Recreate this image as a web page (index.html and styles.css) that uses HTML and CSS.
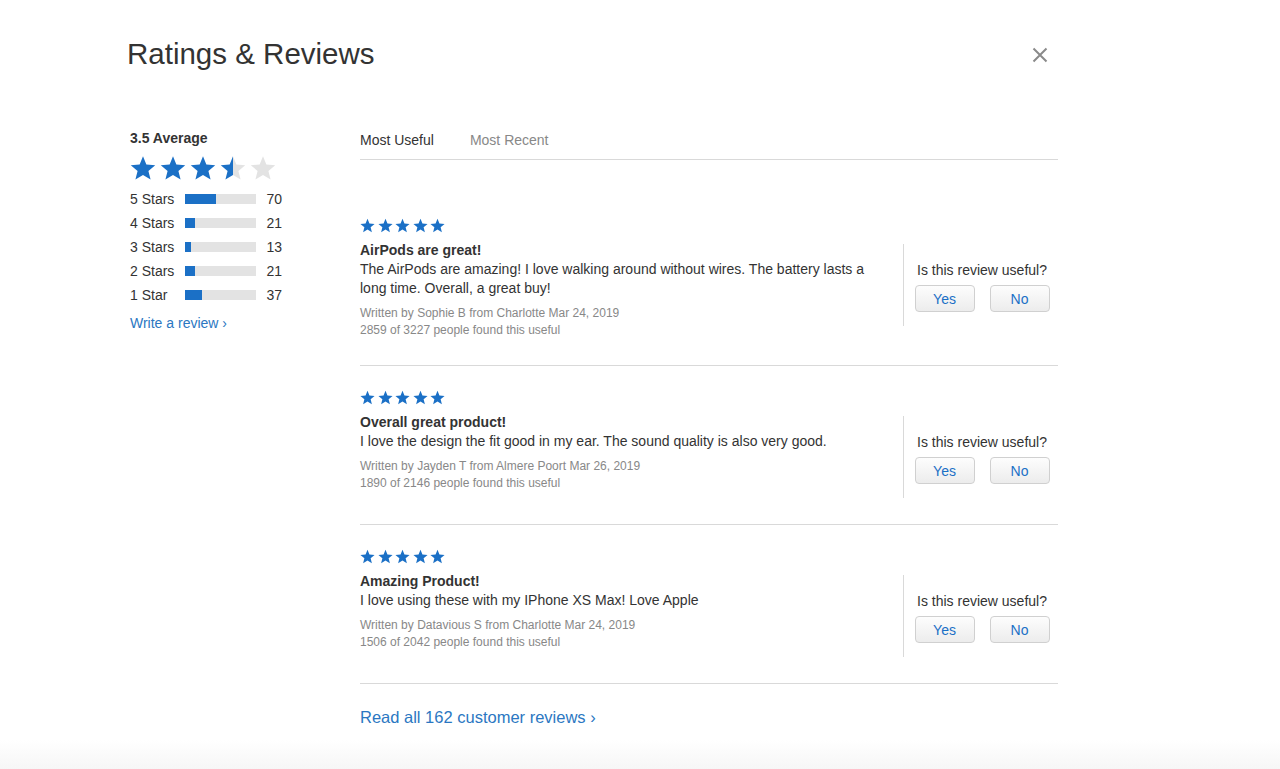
FILE: index.html
```html
<!DOCTYPE html>
<html lang="en">
<head>
  <meta charset="UTF-8" />
  <title>Ratings &amp; Reviews</title>
  <link rel="stylesheet" href="styles.css">
</head>
<body>
  <svg width="0" height="0" class="defs">
    <defs>
      <symbol id="star" viewBox="0 0 24 24">
        <path d="M12 1.2l3.1 7.6 8.2.6-6.3 5.3 2 8L12 18.4l-7 4.3 2-8L.7 9.4l8.2-.6z" />
      </symbol>
      <linearGradient id="half">
        <stop offset="50%" stop-color="#1b70c6" />
        <stop offset="50%" stop-color="#e3e3e3" />
      </linearGradient>
    </defs>
  </svg>

  <div class="page">
    <header class="modal-head">
      <h1>Ratings &amp; Reviews</h1>
      <button class="close" aria-label="Close">
        <svg viewBox="0 0 16 16" width="16" height="16">
          <path d="M1.5 1.5l13 13M14.5 1.5l-13 13" />
        </svg>
      </button>
    </header>

    <div class="columns">
      <!-- summary -->
      <aside class="summary">
        <div class="average">3.5 Average</div>
        <div class="big-stars">
          <svg class="on"><use href="#star" /></svg>
          <svg class="on"><use href="#star" /></svg>
          <svg class="on"><use href="#star" /></svg>
          <svg class="half"><use href="#star" /></svg>
          <svg class="off"><use href="#star" /></svg>
        </div>
        <ul class="histogram">
          <li><span class="label">5 Stars</span><span class="bar"><span class="fill" style="width:44%"></span></span><span class="count">70</span></li>
          <li><span class="label">4 Stars</span><span class="bar"><span class="fill" style="width:14%"></span></span><span class="count">21</span></li>
          <li><span class="label">3 Stars</span><span class="bar"><span class="fill" style="width:9%"></span></span><span class="count">13</span></li>
          <li><span class="label">2 Stars</span><span class="bar"><span class="fill" style="width:14%"></span></span><span class="count">21</span></li>
          <li><span class="label">1 Star</span><span class="bar"><span class="fill" style="width:24%"></span></span><span class="count">37</span></li>
        </ul>
        <a class="link" href="#">Write a review ›</a>
      </aside>

      <!-- reviews -->
      <section class="reviews">
        <nav class="tabs">
          <a class="tab active" href="#">Most Useful</a>
          <a class="tab" href="#">Most Recent</a>
        </nav>

        <div class="review-list">
          <article class="review">
            <div class="small-stars">
              <svg><use href="#star" /></svg><svg><use href="#star" /></svg><svg><use href="#star" /></svg><svg><use href="#star" /></svg><svg><use href="#star" /></svg>
            </div>
            <div class="review-row">
              <div class="review-text">
                <h3>AirPods are great!</h3>
                <p class="body">The AirPods are amazing! I love walking around without wires. The battery lasts a long time. Overall, a great buy!</p>
                <p class="meta">Written by Sophie B from Charlotte Mar 24, 2019<br>2859 of 3227 people found this useful</p>
              </div>
              <div class="vote">
                <div class="question">Is this review useful?</div>
                <div class="vote-buttons">
                  <button class="btn">Yes</button>
                  <button class="btn">No</button>
                </div>
              </div>
            </div>
          </article>

          <article class="review">
            <div class="small-stars">
              <svg><use href="#star" /></svg><svg><use href="#star" /></svg><svg><use href="#star" /></svg><svg><use href="#star" /></svg><svg><use href="#star" /></svg>
            </div>
            <div class="review-row">
              <div class="review-text">
                <h3>Overall great product!</h3>
                <p class="body">I love the design the fit good in my ear. The sound quality is also very good.</p>
                <p class="meta">Written by Jayden T from Almere Poort Mar 26, 2019<br>1890 of 2146 people found this useful</p>
              </div>
              <div class="vote">
                <div class="question">Is this review useful?</div>
                <div class="vote-buttons">
                  <button class="btn">Yes</button>
                  <button class="btn">No</button>
                </div>
              </div>
            </div>
          </article>

          <article class="review">
            <div class="small-stars">
              <svg><use href="#star" /></svg><svg><use href="#star" /></svg><svg><use href="#star" /></svg><svg><use href="#star" /></svg><svg><use href="#star" /></svg>
            </div>
            <div class="review-row">
              <div class="review-text">
                <h3>Amazing Product!</h3>
                <p class="body">I love using these with my IPhone XS Max! Love Apple</p>
                <p class="meta">Written by Datavious S from Charlotte Mar 24, 2019<br>1506 of 2042 people found this useful</p>
              </div>
              <div class="vote">
                <div class="question">Is this review useful?</div>
                <div class="vote-buttons">
                  <button class="btn">Yes</button>
                  <button class="btn">No</button>
                </div>
              </div>
            </div>
          </article>
        </div>

        <a class="read-all" href="#">Read all 162 customer reviews ›</a>
      </section>
    </div>
  </div>

  <div class="page-fade"></div>
</body>
</html>
```

FILE: styles.css
```css
:root {
  --text: #333;
  --muted: #888;
  --blue: #1b70c6;
  --link: #2b77c2;
  --line: #d9d9d9;
  --track: #e3e3e3;
}

* {
  box-sizing: border-box;
}

body {
  margin: 0;
  background: #fff;
  color: var(--text);
  font-family: "Liberation Sans", Arial, sans-serif;
  font-size: 14px;
  overflow: hidden;
}

.defs {
  position: absolute;
}

a {
  text-decoration: none;
}

.page {
  width: 940px;
  margin-left: 127px;
}

/* header */
.modal-head {
  display: flex;
  justify-content: space-between;
  align-items: center;
  padding-top: 36px;
}
.modal-head h1 {
  margin: 0;
  font-size: 29.5px;
  line-height: 36px;
  font-weight: 400;
  color: #333;
}
.close {
  background: none;
  border: none;
  padding: 0;
  margin-right: 19px;
  margin-top: 2px;
  width: 16px;
  height: 16px;
  cursor: pointer;
}
.close svg {
  display: block;
  stroke: #8a8a8a;
  stroke-width: 2;
}

.columns {
  display: flex;
  margin-top: 56px;
}

/* summary column */
.summary {
  width: 233px;
  padding-left: 3px;
}
.average {
  font-weight: 700;
  line-height: 20px;
}
.big-stars {
  display: flex;
  gap: 4px;
  margin-top: 7px;
  height: 26px;
}
.big-stars svg {
  width: 26px;
  height: 26px;
}
.big-stars .on { fill: var(--blue); }
.big-stars .half { fill: url(#half); }
.big-stars .off { fill: var(--track); }

.histogram {
  list-style: none;
  margin: 6px 0 0;
  padding: 0;
}
.histogram li {
  display: flex;
  align-items: center;
  height: 24px;
}
.histogram .label {
  width: 55px;
}
.histogram .bar {
  width: 71px;
  height: 10px;
  background: var(--track);
}
.histogram .fill {
  display: block;
  height: 100%;
  background: var(--blue);
}
.histogram .count {
  width: 26px;
  text-align: right;
}
.link {
  display: inline-block;
  margin-top: 6px;
  line-height: 20px;
  color: var(--link);
}

/* reviews column */
.reviews {
  width: 698px;
}
.tabs {
  display: flex;
  gap: 36px;
  padding-top: 2px;
  padding-bottom: 9px;
  border-bottom: 1px solid var(--line);
}
.tab {
  line-height: 20px;
  color: var(--muted);
}
.tab.active {
  color: var(--text);
}

.review-list {
  padding-top: 34px;
}
.review {
  padding: 24px 0 26px;
  border-bottom: 1px solid var(--line);
}
.small-stars {
  display: flex;
  gap: 2.5px;
  height: 15px;
}
.small-stars svg {
  width: 15px;
  height: 15px;
  fill: var(--blue);
}
.review-row {
  display: flex;
  margin-top: 8px;
}
.review-text {
  flex: 1;
  padding-right: 36px;
}
.review-text h3 {
  margin: 0;
  font-size: 14px;
  line-height: 19px;
  font-weight: 700;
}
.review-text .body {
  margin: 0;
  line-height: 19px;
}
.review-text .meta {
  margin: 7px 0 0;
  font-size: 12px;
  line-height: 17px;
  color: var(--muted);
}

.vote {
  width: 155px;
  height: 82px;
  margin-top: 3px;
  border-left: 1px solid var(--line);
  padding-top: 16px;
  padding-left: 2px;
  text-align: center;
}
.question {
  line-height: 20px;
}
.vote-buttons {
  display: flex;
  justify-content: center;
  gap: 15px;
  margin-top: 5px;
}
.btn {
  width: 60px;
  height: 27px;
  border: 1px solid #d0d0d0;
  border-radius: 4px;
  background: linear-gradient(#fdfdfd, #ececec);
  color: var(--blue);
  font-family: inherit;
  font-size: 14px;
  cursor: pointer;
}

.read-all {
  display: inline-block;
  margin-top: 22px;
  font-size: 16.5px;
  line-height: 22px;
  color: var(--link);
}

.page-fade {
  height: 40px;
  margin-top: 12px;
  background: linear-gradient(#fff, #f3f3f3);
}
```
